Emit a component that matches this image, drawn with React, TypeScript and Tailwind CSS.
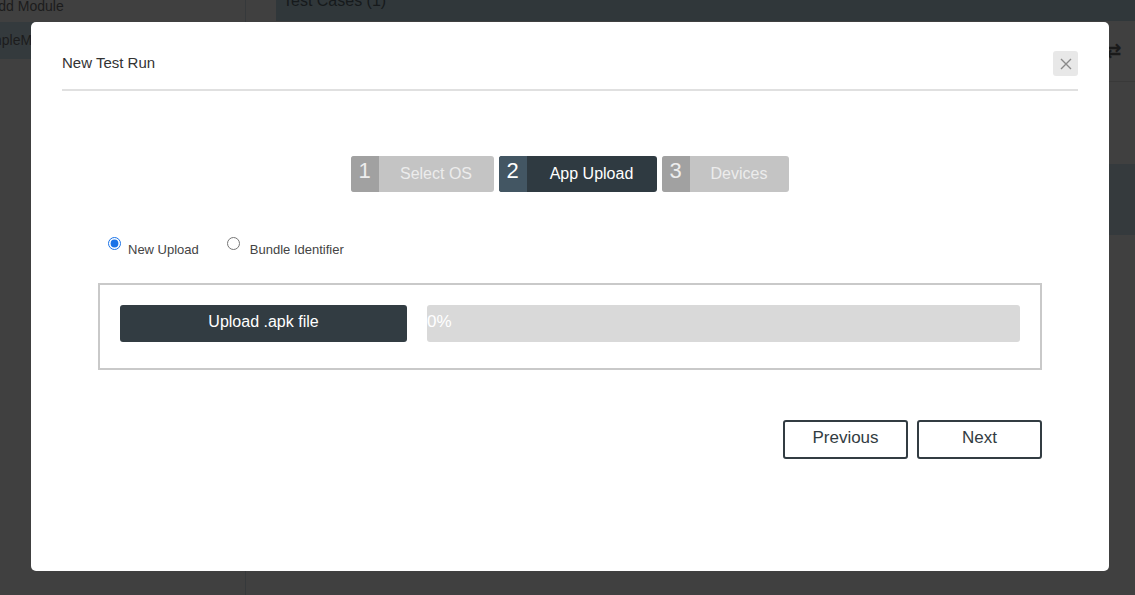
import { useState } from "react";

const font = { fontFamily: '"Liberation Sans", Arial, sans-serif' };

function Step({ n, label, width, active }: { n: number; label: string; width: string; active?: boolean }) {
  return (
    <div className={`flex h-[36px] overflow-hidden rounded-[3px] ${active ? "bg-[#2f3a41]" : "bg-[#c4c4c4]"}`}>
      <div
        className={`flex w-[28px] items-start justify-center pt-[3px] text-[22px] leading-[24px] ${
          active ? "bg-[#435663] text-white" : "bg-[#a1a1a1] text-[#ededed]"
        }`}
      >
        {n}
      </div>
      <div
        className={`flex items-center justify-center text-[16px] ${width} ${active ? "text-white" : "text-[#ececec]"}`}
      >
        {label}
      </div>
    </div>
  );
}

export default function App() {
  const [mode, setMode] = useState<"new" | "bundle">("new");

  return (
    <div className="relative flex h-[595px] w-[1135px] overflow-hidden bg-[#404040]" style={font}>
      {/* background page under the overlay */}
      <aside className="w-[246px] shrink-0 border-r border-[#36393b]">
        <div className="-ml-[11px] h-[22px] text-[14px] leading-[12px] text-[#1c1c1c]">Add Module</div>
        <div className="-ml-[34px] flex h-[37px] items-center bg-[#343a3d] text-[14px] text-[#1c1c1c]">
          ExampleModule
        </div>
      </aside>
      <main className="flex-1 pl-[30px]">
        <div className="flex h-[21px] items-end overflow-hidden bg-[#30373a] pl-[7px] text-[16px] leading-[10px] text-[#161a1c]">
          <span className="mb-[12px] leading-[16px]">Test Cases (1)</span>
        </div>
        <div className="flex h-[61px] items-center justify-end border-b border-[#393939] pr-[14px] text-[18px] font-bold text-[#1a1a1a]">
          ⇄
        </div>
        <div className="h-[82px]" />
        <div className="h-[71px] bg-[#353a3d]" />
      </main>

      {/* modal */}
      <div className="absolute left-[31px] top-[22px] flex h-[549px] w-[1078px] flex-col rounded-[5px] bg-white px-[31px]">
        <div className="flex h-[69px] items-end justify-between border-b-2 border-[#e0e0e0] pb-[12px]">
          <h2 className="mb-[3px] text-[15px] text-[#333]">New Test Run</h2>
          <button className="mb-[1px] flex h-[25px] w-[25px] items-center justify-center rounded-[3px] bg-[#e8e8e8] text-[#8a8a8a]">
            <svg width="12" height="12" viewBox="0 0 12 12" stroke="currentColor" strokeWidth="1.4">
              <path d="M1 1l10 10M11 1L1 11" />
            </svg>
          </button>
        </div>

        <div className="mt-[65px] flex justify-center gap-[5px] pr-[1px]">
          <Step n={1} label="Select OS" width="w-[115px]" />
          <Step n={2} label="App Upload" width="w-[130px]" active />
          <Step n={3} label="Devices" width="w-[99px]" />
        </div>

        <div className="mt-[44px] flex items-start pl-[46px] text-[13px] text-[#444]">
          <label className="flex items-start gap-[7px]">
            <input
              type="radio"
              checked={mode === "new"}
              onChange={() => setMode("new")}
              className="mt-[1px] h-[13px] w-[13px] accent-[#1a73e8]"
            />
            <span className="mt-[4px]">New Upload</span>
          </label>
          <label className="ml-[28px] flex items-start gap-[10px]">
            <input
              type="radio"
              checked={mode === "bundle"}
              onChange={() => setMode("bundle")}
              className="mt-[1px] h-[13px] w-[13px]"
            />
            <span className="mt-[4px]">Bundle Identifier</span>
          </label>
        </div>

        <div className="ml-[36px] mr-[36px] mt-[23px] flex h-[87px] items-start gap-[20px] border-2 border-[#c9c9c9] px-[20px] pt-[20px]">
          <button className="h-[37px] w-[287px] shrink-0 rounded-[3px] bg-[#323c42] pb-[2px] text-[16px] text-white">
            Upload .apk file
          </button>
          <div className="flex h-[37px] flex-1 items-center rounded-[3px] bg-[#d9d9d9] pb-[2px] text-[17px] text-white">
            0%
          </div>
        </div>

        <div className="mr-[36px] mt-[50px] flex justify-end gap-[9px]">
          <button className="h-[39px] w-[125px] rounded-[3px] border-2 border-[#323c42] pb-[3px] text-[17px] text-[#323c42]">
            Previous
          </button>
          <button className="h-[39px] w-[125px] rounded-[3px] border-2 border-[#323c42] pb-[3px] text-[17px] text-[#323c42]">
            Next
          </button>
        </div>
      </div>
    </div>
  );
}
